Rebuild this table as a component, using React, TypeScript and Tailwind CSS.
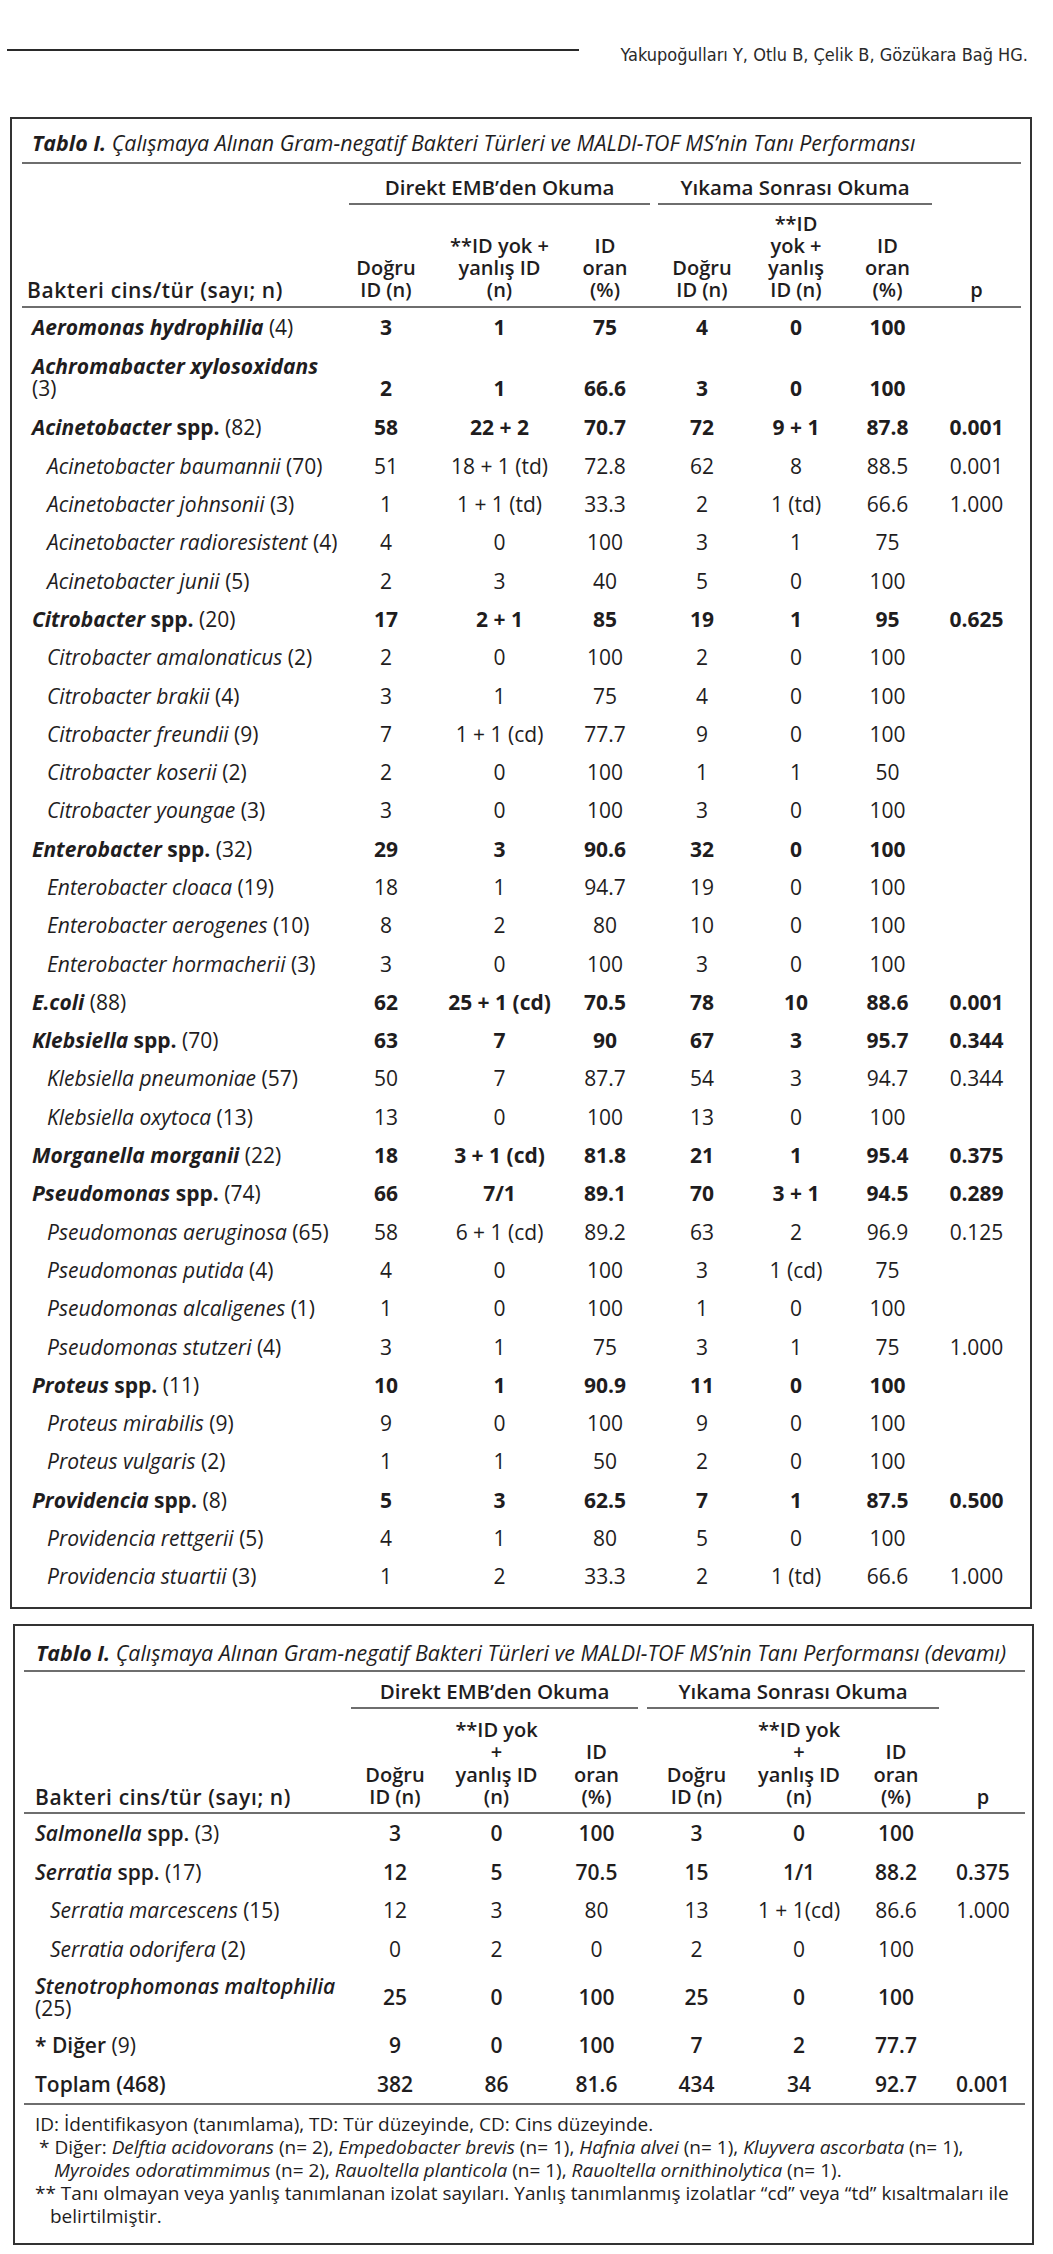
import React from "react"

type Row = {
  label: React.ReactNode
  v: string[]
  strong?: boolean
  sub?: boolean
  tall?: boolean
}

const T1 = "grid grid-cols-[306px_116px_111px_100px_94px_94px_89px_89px]"
const T2 = "grid grid-cols-[320px_102px_101px_99px_101px_104px_90px_84px]"

const G = (name: string, rest: string) => (
  <>
    <span className="font-bold italic">{name}</span> {rest}
  </>
)
const S = (name: string, rest: string) => (
  <>
    <span className="font-bold">
      <span className="italic">{name}</span> spp.
    </span>{" "}
    {rest}
  </>
)
const I = (name: string, rest: string) => (
  <>
    <span className="italic">{name}</span> {rest}
  </>
)

const rows1: Row[] = [
  { label: G("Aeromonas hydrophilia", "(4)"), v: ["3", "1", "75", "4", "0", "100", ""], strong: true },
  {
    label: (
      <>
        <span className="font-bold italic">Achromabacter xylosoxidans</span>
        <br />
        (3)
      </>
    ),
    v: ["2", "1", "66.6", "3", "0", "100", ""],
    strong: true,
    tall: true,
  },
  { label: S("Acinetobacter", "(82)"), v: ["58", "22 + 2", "70.7", "72", "9 + 1", "87.8", "0.001"], strong: true },
  { label: I("Acinetobacter baumannii", "(70)"), v: ["51", "18 + 1 (td)", "72.8", "62", "8", "88.5", "0.001"], sub: true },
  { label: I("Acinetobacter johnsonii", "(3)"), v: ["1", "1 + 1 (td)", "33.3", "2", "1 (td)", "66.6", "1.000"], sub: true },
  { label: I("Acinetobacter radioresistent", "(4)"), v: ["4", "0", "100", "3", "1", "75", ""], sub: true },
  { label: I("Acinetobacter junii", "(5)"), v: ["2", "3", "40", "5", "0", "100", ""], sub: true },
  { label: S("Citrobacter", "(20)"), v: ["17", "2 + 1", "85", "19", "1", "95", "0.625"], strong: true },
  { label: I("Citrobacter amalonaticus", "(2)"), v: ["2", "0", "100", "2", "0", "100", ""], sub: true },
  { label: I("Citrobacter brakii", "(4)"), v: ["3", "1", "75", "4", "0", "100", ""], sub: true },
  { label: I("Citrobacter freundii", "(9)"), v: ["7", "1 + 1 (cd)", "77.7", "9", "0", "100", ""], sub: true },
  { label: I("Citrobacter koserii", "(2)"), v: ["2", "0", "100", "1", "1", "50", ""], sub: true },
  { label: I("Citrobacter youngae", "(3)"), v: ["3", "0", "100", "3", "0", "100", ""], sub: true },
  { label: S("Enterobacter", "(32)"), v: ["29", "3", "90.6", "32", "0", "100", ""], strong: true },
  { label: I("Enterobacter cloaca", "(19)"), v: ["18", "1", "94.7", "19", "0", "100", ""], sub: true },
  { label: I("Enterobacter aerogenes", "(10)"), v: ["8", "2", "80", "10", "0", "100", ""], sub: true },
  { label: I("Enterobacter hormacherii", "(3)"), v: ["3", "0", "100", "3", "0", "100", ""], sub: true },
  { label: G("E.coli", "(88)"), v: ["62", "25 + 1 (cd)", "70.5", "78", "10", "88.6", "0.001"], strong: true },
  { label: S("Klebsiella", "(70)"), v: ["63", "7", "90", "67", "3", "95.7", "0.344"], strong: true },
  { label: I("Klebsiella pneumoniae", "(57)"), v: ["50", "7", "87.7", "54", "3", "94.7", "0.344"], sub: true },
  { label: I("Klebsiella oxytoca", "(13)"), v: ["13", "0", "100", "13", "0", "100", ""], sub: true },
  { label: G("Morganella morganii", "(22)"), v: ["18", "3 + 1 (cd)", "81.8", "21", "1", "95.4", "0.375"], strong: true },
  { label: S("Pseudomonas", "(74)"), v: ["66", "7/1", "89.1", "70", "3 + 1", "94.5", "0.289"], strong: true },
  { label: I("Pseudomonas aeruginosa", "(65)"), v: ["58", "6 + 1 (cd)", "89.2", "63", "2", "96.9", "0.125"], sub: true },
  { label: I("Pseudomonas putida", "(4)"), v: ["4", "0", "100", "3", "1 (cd)", "75", ""], sub: true },
  { label: I("Pseudomonas alcaligenes", "(1)"), v: ["1", "0", "100", "1", "0", "100", ""], sub: true },
  { label: I("Pseudomonas stutzeri", "(4)"), v: ["3", "1", "75", "3", "1", "75", "1.000"], sub: true },
  { label: S("Proteus", "(11)"), v: ["10", "1", "90.9", "11", "0", "100", ""], strong: true },
  { label: I("Proteus mirabilis", "(9)"), v: ["9", "0", "100", "9", "0", "100", ""], sub: true },
  { label: I("Proteus vulgaris", "(2)"), v: ["1", "1", "50", "2", "0", "100", ""], sub: true },
  { label: S("Providencia", "(8)"), v: ["5", "3", "62.5", "7", "1", "87.5", "0.500"], strong: true },
  { label: I("Providencia rettgerii", "(5)"), v: ["4", "1", "80", "5", "0", "100", ""], sub: true },
  { label: I("Providencia stuartii", "(3)"), v: ["1", "2", "33.3", "2", "1 (td)", "66.6", "1.000"], sub: true },
]

const rows2: Row[] = [
  {
    label: (
      <>
        <span className="font-semibold">
          <span className="italic">Salmonella</span> spp.
        </span>{" "}
        (3)
      </>
    ),
    v: ["3", "0", "100", "3", "0", "100", ""],
    strong: true,
  },
  {
    label: (
      <>
        <span className="font-semibold">
          <span className="italic">Serratia</span> spp.
        </span>{" "}
        (17)
      </>
    ),
    v: ["12", "5", "70.5", "15", "1/1", "88.2", "0.375"],
    strong: true,
  },
  { label: I("Serratia marcescens", "(15)"), v: ["12", "3", "80", "13", "1 + 1(cd)", "86.6", "1.000"], sub: true },
  { label: I("Serratia odorifera", "(2)"), v: ["0", "2", "0", "2", "0", "100", ""], sub: true },
  {
    label: (
      <>
        <span className="font-semibold italic">Stenotrophomonas maltophilia</span>
        <br />
        (25)
      </>
    ),
    v: ["25", "0", "100", "25", "0", "100", ""],
    strong: true,
    tall: true,
  },
  {
    label: (
      <>
        <span className="font-semibold">* Diğer</span> (9)
      </>
    ),
    v: ["9", "0", "100", "7", "2", "77.7", ""],
    strong: true,
  },
  {
    label: <span className="font-semibold">Toplam (468)</span>,
    v: ["382", "86", "81.6", "434", "34", "92.7", "0.001"],
    strong: true,
  },
]

function Title({ extra, pad }: { extra?: string; pad: string }) {
  return (
    <div className={`border-b-2 border-[#6e6e6e] ${pad} text-[21.4px] leading-[24px] italic whitespace-nowrap`}>
      <span className="font-bold">Tablo I.</span> Çalışmaya Alınan Gram-negatif Bakteri Türleri ve MALDI-TOF
      MS’nin Tanı Performansı{extra}
    </div>
  )
}

export default function App() {
  return (
    <div className="w-[1053px] min-h-[2254px] bg-white text-[#1f1d1e] font-['Open_Sans','Noto_Sans',sans-serif]">
      {/* running head */}
      <div className="flex items-center pt-[44px]">
        <div className="ml-[7px] mb-[10px] h-[1.5px] w-[572px] bg-[#2a2a2a]" />
        <div className="ml-auto mr-[25px] text-[18px] leading-[22px] text-[#2a2a2a] font-['Liberation_Sans_Narrow','DejaVu_Sans_Condensed',sans-serif]">
          Yakupoğulları Y, Otlu B, Çelik B, Gözükara Bağ HG.
        </div>
      </div>

      {/* table 1 */}
      <div className="mt-[51px] ml-[10px] w-[1022px] h-[1492px] border-2 border-[#333] pl-[10px] pr-[9px]">
        <Title pad="pt-[12px] pb-[7px] pl-[10px]" />

        <div className={`${T1} pt-[12px] font-semibold text-[20.5px] leading-[22px]`}>
          <div />
          <div className="col-span-3 ml-[21px] mr-[5px] border-b-2 border-[#6e6e6e] pb-[5px] text-center">
            Direkt EMB’den Okuma
          </div>
          <div className="col-span-3 ml-[3px] border-b-2 border-[#6e6e6e] pb-[5px] text-center">
            Yıkama Sonrası Okuma
          </div>
          <div />
        </div>

        <div className={`${T1} items-end border-b-2 border-[#6e6e6e] pt-[8px] pb-[5px] font-semibold text-[20px] leading-[22px]`}>
          <div className="pl-[5px] whitespace-nowrap text-[21px] tracking-[0.6px]">Bakteri cins/tür (sayı; n)</div>
          <div className="text-center">
            Doğru
            <br />
            ID (n)
          </div>
          <div className="text-center whitespace-nowrap">
            **ID yok +
            <br />
            yanlış ID
            <br />
            (n)
          </div>
          <div className="text-center">
            ID
            <br />
            oran
            <br />
            (%)
          </div>
          <div className="text-center">
            Doğru
            <br />
            ID (n)
          </div>
          <div className="text-center">
            **ID
            <br />
            yok +
            <br />
            yanlış
            <br />
            ID (n)
          </div>
          <div className="text-center">
            ID
            <br />
            oran
            <br />
            (%)
          </div>
          <div className="text-center">p</div>
        </div>

        {rows1.map((r, i) => (
          <div
            key={i}
            className={`${T1} text-[21px] leading-[22px] ${r.tall ? "h-[62px] items-end pb-[9px]" : "h-[38.3px] items-center"}`}
          >
            <div className={`whitespace-nowrap ${r.sub ? "pl-[25px]" : "pl-[10px]"}`}>{r.label}</div>
            {r.v.map((x, j) => (
              <div key={j} className={`text-center whitespace-nowrap ${r.strong ? "font-bold" : ""}`}>
                {x}
              </div>
            ))}
          </div>
        ))}
      </div>

      {/* table 2 */}
      <div className="mt-[15px] ml-[13px] w-[1021px] h-[621px] border-2 border-[#333] pl-[9px] pr-[7px]">
        <Title extra=" (devamı)" pad="pt-[15px] pb-[5px] pl-[12px]" />

        <div className={`${T2} pt-[8px] font-semibold text-[20.5px] leading-[22px]`}>
          <div />
          <div className="col-span-3 ml-[7px] mr-[8px] border-b-2 border-[#6e6e6e] pb-[5px] text-center">
            Direkt EMB’den Okuma
          </div>
          <div className="col-span-3 ml-[1px] mr-[2px] border-b-2 border-[#6e6e6e] pb-[5px] text-center">
            Yıkama Sonrası Okuma
          </div>
          <div />
        </div>

        <div className={`${T2} items-end border-b-2 border-[#6e6e6e] pt-[10px] pb-[4px] font-semibold text-[20px] leading-[22.3px]`}>
          <div className="pl-[11px] whitespace-nowrap text-[21px] tracking-[0.6px]">Bakteri cins/tür (sayı; n)</div>
          <div className="text-center">
            Doğru
            <br />
            ID (n)
          </div>
          <div className="text-center whitespace-nowrap">
            **ID yok
            <br />+<br />
            yanlış ID
            <br />
            (n)
          </div>
          <div className="text-center">
            ID
            <br />
            oran
            <br />
            (%)
          </div>
          <div className="text-center">
            Doğru
            <br />
            ID (n)
          </div>
          <div className="text-center whitespace-nowrap">
            **ID yok
            <br />+<br />
            yanlış ID
            <br />
            (n)
          </div>
          <div className="text-center">
            ID
            <br />
            oran
            <br />
            (%)
          </div>
          <div className="text-center">p</div>
        </div>

        <div className="border-b-2 border-[#6e6e6e]">
          {rows2.map((r, i) => (
            <div
              key={i}
              className={`${T2} items-center text-[21px] leading-[22px] ${r.tall ? "h-[58px]" : "h-[38.5px]"}`}
            >
              <div className={`whitespace-nowrap ${r.sub ? "pl-[26px]" : "pl-[11px]"}`}>{r.label}</div>
              {r.v.map((x, j) => (
                <div key={j} className={`text-center whitespace-nowrap ${r.strong ? "font-semibold" : ""}`}>
                  {x}
                </div>
              ))}
            </div>
          ))}
        </div>

        <div className="pt-[8px] pl-[11px] text-[19px] leading-[23px] whitespace-nowrap">
          <div>ID: İdentifikasyon (tanımlama), TD: Tür düzeyinde, CD: Cins düzeyinde.</div>
          <div className="pl-[4px]">
            * Diğer: <i>Delftia acidovorans</i> (n= 2), <i>Empedobacter brevis</i> (n= 1), <i>Hafnia alvei</i> (n=
            1), <i>Kluyvera ascorbata</i> (n= 1),
          </div>
          <div className="pl-[19px]">
            <i>Myroides odoratimmimus</i> (n= 2), <i>Rauoltella planticola</i> (n= 1), <i>Rauoltella ornithinolytica</i>{" "}
            (n= 1).
          </div>
          <div>
            ** Tanı olmayan veya yanlış tanımlanan izolat sayıları. Yanlış tanımlanmış izolatlar “cd” veya “td”
            kısaltmaları ile
          </div>
          <div className="pl-[15px]">belirtilmiştir.</div>
        </div>
      </div>
    </div>
  )
}
